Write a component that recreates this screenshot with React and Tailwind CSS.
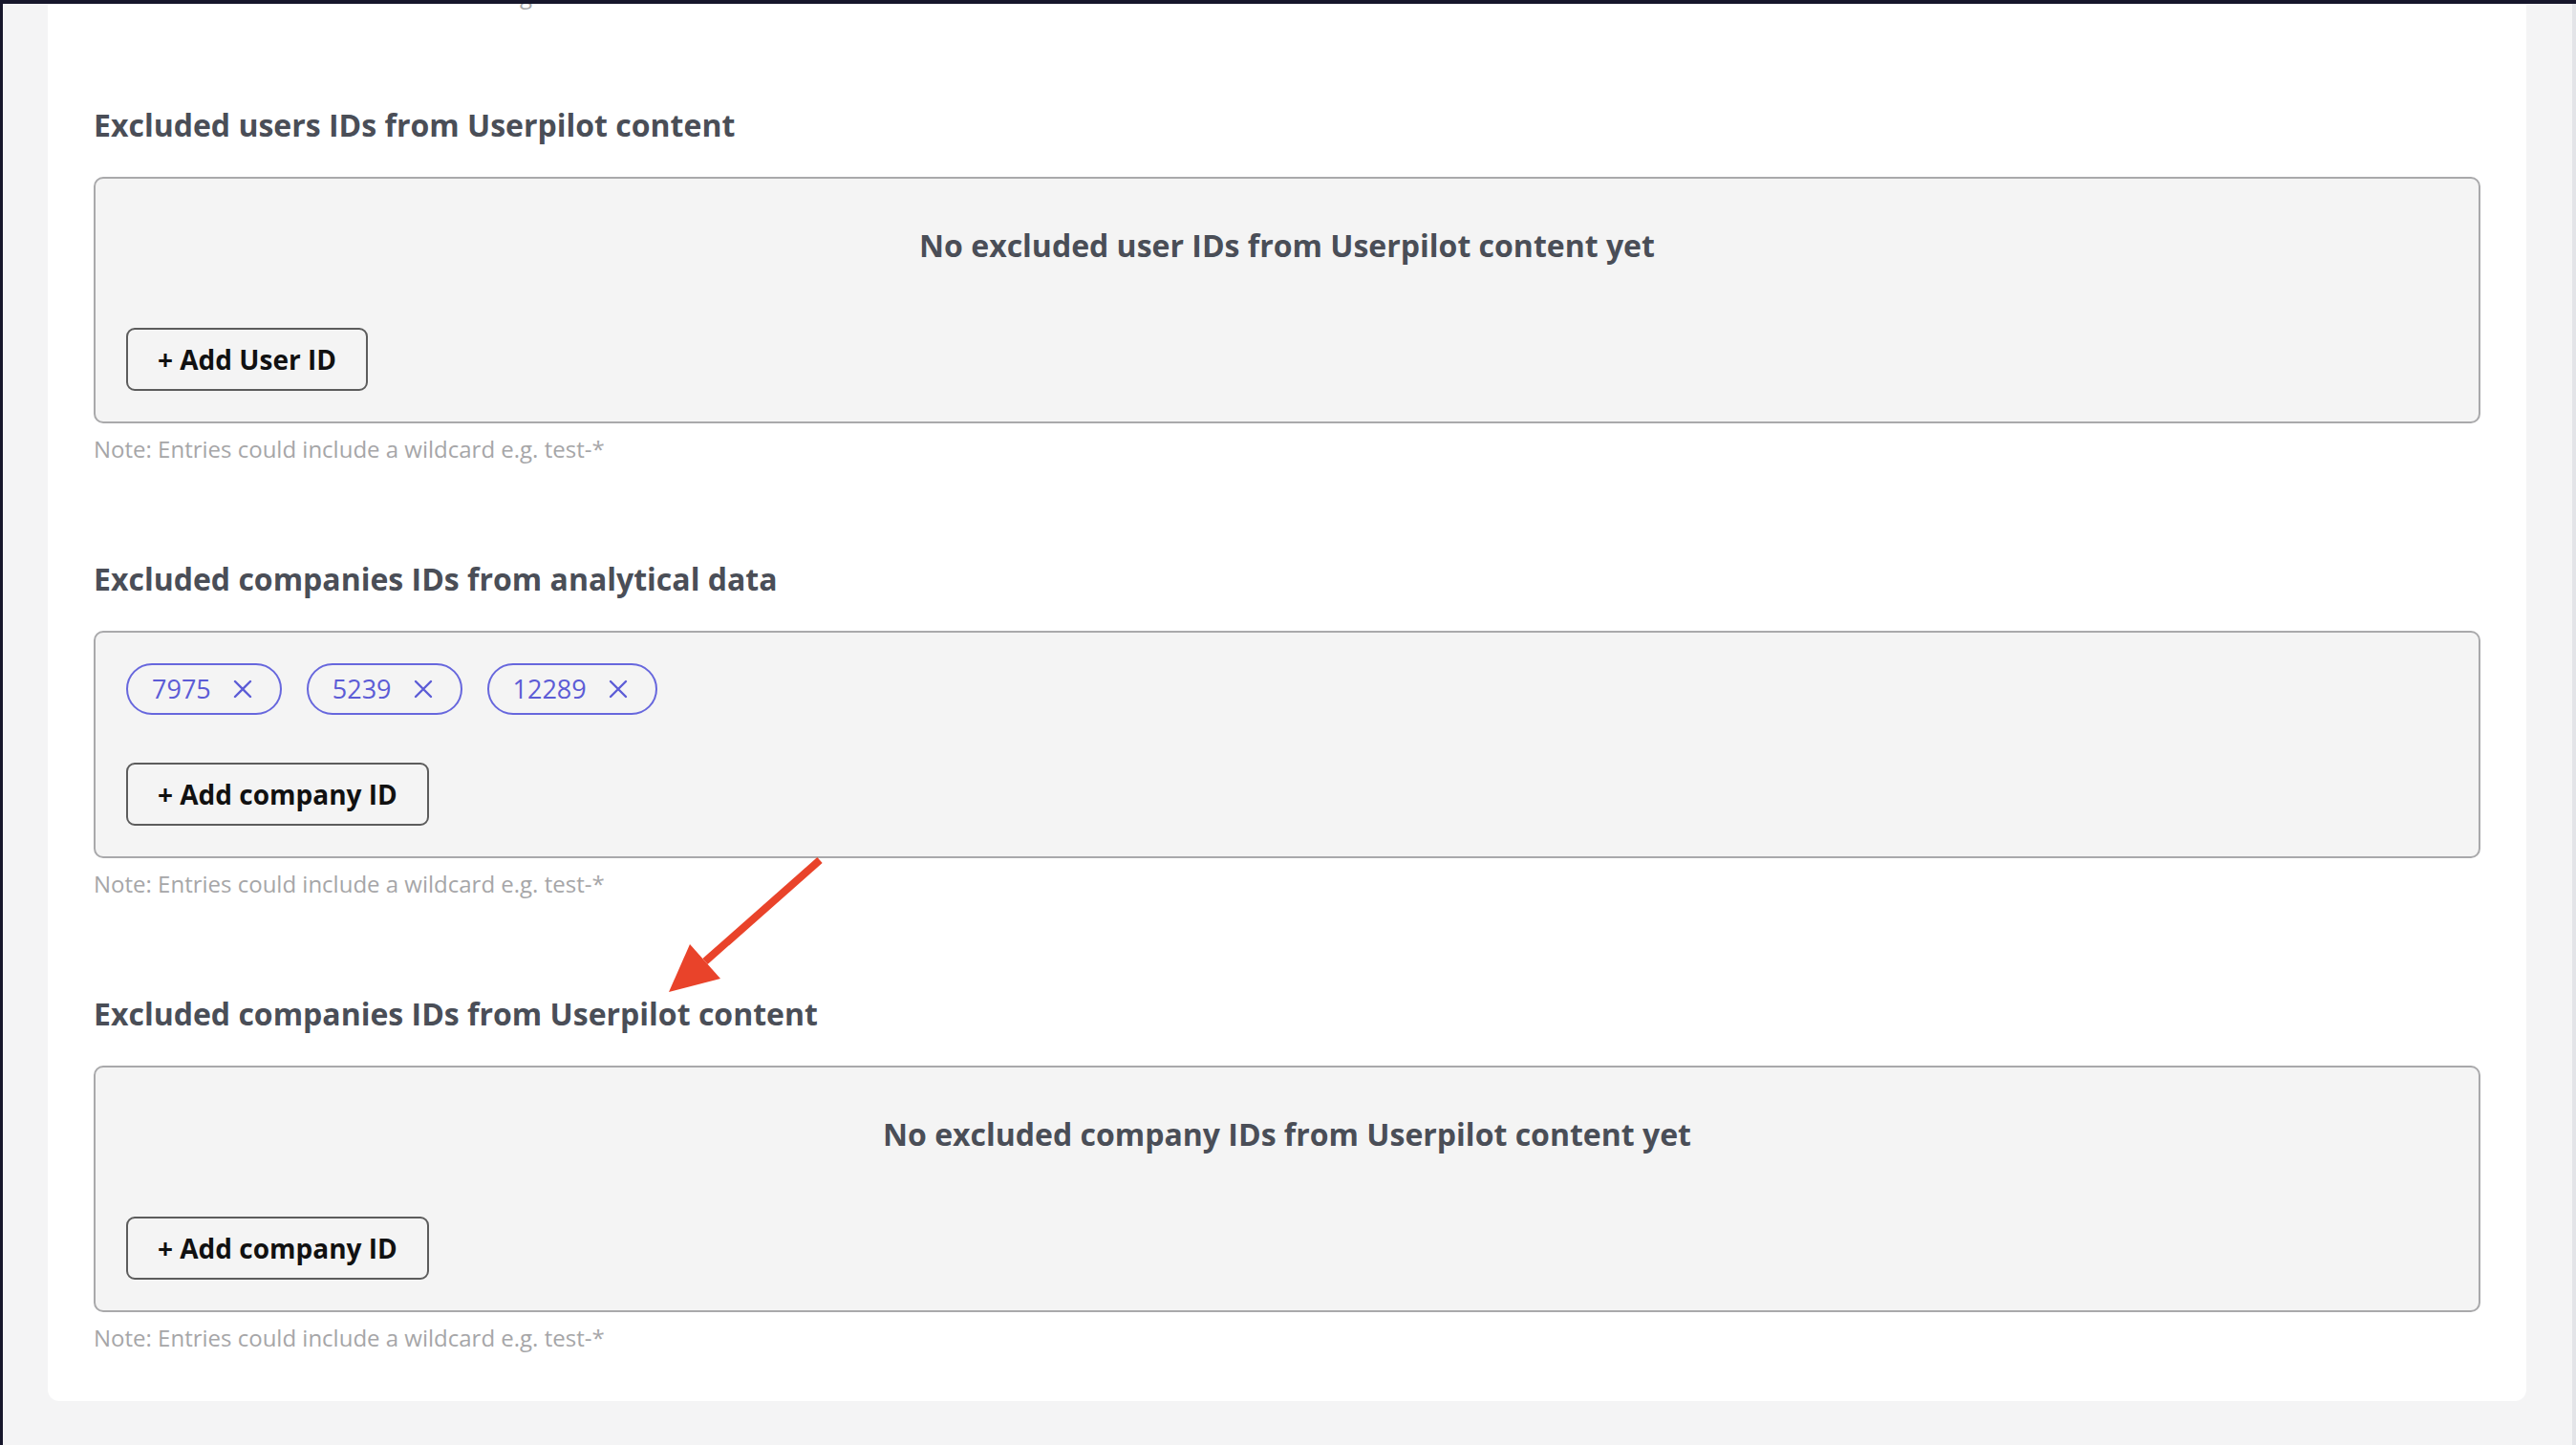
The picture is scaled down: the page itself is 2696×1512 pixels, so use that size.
import React from "react";

const sections = [
  {
    title: "Excluded users IDs from Userpilot content",
    emptyText: "No excluded user IDs from Userpilot content yet",
    chips: [],
    buttonLabel: "+ Add User ID",
  },
  {
    title: "Excluded companies IDs from analytical data",
    emptyText: "",
    chips: ["7975", "5239", "12289"],
    buttonLabel: "+ Add company ID",
  },
  {
    title: "Excluded companies IDs from Userpilot content",
    emptyText: "No excluded company IDs from Userpilot content yet",
    chips: [],
    buttonLabel: "+ Add company ID",
  },
];

function Note({ className = "" }) {
  return (
    <p className={"text-[24px] leading-[30px] text-[#a6a6a8] " + className}>
      Note: Entries could include a wildcard e.g. test-*
    </p>
  );
}

function Chip({ label }) {
  return (
    <div className="flex h-[54px] items-center gap-[23px] rounded-full border-2 border-[#6767dd] pl-[25px] pr-[29px] text-[27px] text-[#5c5cd6]">
      <span>{label}</span>
      <svg width="20" height="20" viewBox="0 0 20 20" fill="none">
        <path d="M2 2L18 18M18 2L2 18" stroke="#5c5cd6" strokeWidth="2.4" strokeLinecap="round" />
      </svg>
    </div>
  );
}

function AddButton({ label }) {
  return (
    <button className="h-[66px] rounded-[9px] border-2 border-[#5c5c5c] bg-[#f4f4f4] px-[31px] text-[28px] font-bold text-[#111]">
      {label}
    </button>
  );
}

function Section({ title, emptyText, chips, buttonLabel }) {
  return (
    <div className="mt-[101px]">
      <h2 className="text-[32px] font-bold leading-[40px] text-[#4a4e57]">{title}</h2>
      <div className="mt-[34px] rounded-[10px] border-2 border-[#a9a9ab] bg-[#f4f4f4] p-8">
        {chips.length > 0 ? (
          <div className="flex gap-[26px]">
            {chips.map((c) => (
              <Chip key={c} label={c} />
            ))}
          </div>
        ) : (
          <p className="pt-[18px] text-center text-[32px] font-bold leading-[40px] text-[#4a4e57]">
            {emptyText}
          </p>
        )}
        <div className={chips.length > 0 ? "mt-[50px]" : "mt-[66px]"}>
          <AddButton label={buttonLabel} />
        </div>
      </div>
      <Note className="mt-[12px]" />
    </div>
  );
}

export default function App() {
  return (
    <div
      className="relative h-[1512px] w-full overflow-hidden border-t-4 border-[#16162b] bg-[#f4f4f5]"
      style={{ fontFamily: '"Open Sans", "Noto Sans", sans-serif' }}
    >
      <div className="flex h-full">
        <div className="w-[3px] bg-[#16162b]" />
        <div className="flex-1 pl-[47px] pr-[48px]">
          <div className="rounded-b-[12px] bg-white px-12 pb-[51px]">
            <Note className="-mt-[24px]" />
            {sections.map((s) => (
              <Section key={s.title} {...s} />
            ))}
          </div>
        </div>
        <div className="w-[4px] bg-[#e3e4e8]" />
      </div>

      {/* annotation arrow */}
      <svg className="pointer-events-none absolute left-0 top-0" width="2696" height="1512">
        <line x1="858" y1="896" x2="738" y2="1002" stroke="#e9432a" strokeWidth="8" />
        <polygon points="700,1034 722,984 754,1020" fill="#e9432a" />
      </svg>
    </div>
  );
}
